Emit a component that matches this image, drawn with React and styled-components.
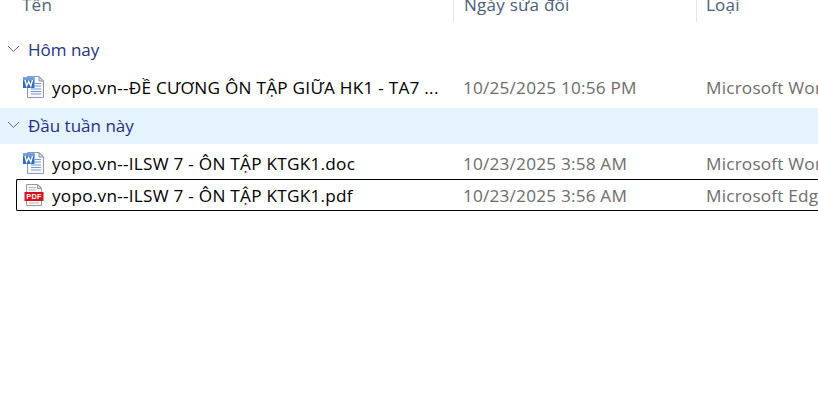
import React from "react";
import styled, { createGlobalStyle } from "styled-components";

const Global = createGlobalStyle`
  html, body { margin: 0; padding: 0; background: #fff; }
  body { font-family: "Open Sans", "Noto Sans", "Liberation Sans", sans-serif; }
`;

const Page = styled.div`
  width: 818px;
  height: 402px;
  overflow: hidden;
  background: #fff;
  display: flex;
  flex-direction: column;
`;

const Header = styled.div`
  height: 22px;
  flex: none;
  display: grid;
  grid-template-columns: 453px 243px 1fr;
  overflow: hidden;
  margin-bottom: 10px;
`;

const HeaderCell = styled.div`
  display: flex;
  align-items: flex-end;
  height: 22px;
  padding-left: ${(p) => p.$pad}px;
  padding-bottom: 6px;
  box-sizing: border-box;
  border-left: ${(p) => (p.$sep ? "1px solid #e5e5e5" : "none")};
  font-size: 17px;
  letter-spacing: 0.25px;
  line-height: 22px;
  color: #4c607a;
  white-space: nowrap;
`;

const Group = styled.div`
  height: 36px;
  box-sizing: border-box;
  padding: 0 0 2px 7px;
  display: flex;
  align-items: center;
  gap: 8px;
  background: ${(p) => (p.$hot ? "#e5f3ff" : "transparent")};
  color: #1e3287;
  font-size: 17px;
  flex: none;
`;

const Chevron = styled.svg`
  width: 13px;
  height: 8px;
  flex: none;
`;

const Rows = styled.div`
  display: flex;
  flex-direction: column;
  padding: ${(p) => p.$top}px 0 ${(p) => p.$bottom}px 16px;
`;

const Row = styled.div`
  height: 32px;
  display: grid;
  grid-template-columns: 437px 243px 1fr;
  align-items: center;
  box-sizing: border-box;
  border: 1px solid ${(p) => (p.$selected ? "#000" : "transparent")};
  border-right: none;
  border-radius: 2px 0 0 2px;
  margin-right: -2px;
  white-space: nowrap;
  overflow: hidden;
`;

const NameCell = styled.div`
  display: flex;
  align-items: center;
  gap: 6px;
  padding-left: 6px;
  margin-left: -1px;
  color: #000;
  font-size: 17.2px;
  letter-spacing: 0.25px;
`;

const Cell = styled.div`
  padding-left: 10px;
  margin-left: -1px;
  color: #6d6d6d;
  font-size: 17.2px;
  letter-spacing: 0.2px;
`;

const FileIcon = styled.svg`
  width: 24px;
  height: 24px;
  flex: none;
`;

const Chev = () => (
  <Chevron viewBox="0 0 13 8">
    <path d="M1 1 L6.5 6.5 L12 1" fill="none" stroke="#6f6f6f" strokeWidth="1" />
  </Chevron>
);

const WordIcon = () => (
  <FileIcon viewBox="0 0 24 24">
    <path d="M5.5 1.5H17L21.5 6V22.5H5.5Z" fill="#f7f9fc" stroke="#8b9bb4" />
    <path d="M17 1.5V6H21.5Z" fill="#c9d7ea" stroke="#8b9bb4" />
    <path d="M13 8.5H19M13 11H19M9 14H19M9 16.5H19M9 19H19" stroke="#7c9ccb" strokeWidth="1.2" />
    <rect x="1" y="2.5" width="11.5" height="10.5" fill="#2f68c0" />
    <rect x="1" y="2.5" width="11.5" height="3" fill="#6c9be0" />
    <path d="M3 5 L4.6 11 L6.7 6.5 L8.8 11 L10.5 5" fill="none" stroke="#fff" strokeWidth="1.4" />
  </FileIcon>
);

const PdfIcon = () => (
  <FileIcon viewBox="0 0 24 24">
    <path d="M4.5 1.5H16L19.5 5V22.5H4.5Z" fill="#fafafa" stroke="#9a9a9a" />
    <path d="M15.5 1.5V5.5H19.5Z" fill="#dedede" stroke="#9a9a9a" />
    <path d="M7 4.5H14M7 7H14" stroke="#b5b5b5" />
    <path d="M7 20H17" stroke="#b5b5b5" />
    <rect x="2.5" y="9" width="19" height="9" fill="#d8101c" />
    <text x="12" y="16.2" textAnchor="middle" fontSize="7.4" fontWeight="700" fill="#fff" fontFamily="Liberation Sans, sans-serif">PDF</text>
  </FileIcon>
);

export default function App() {
  return (
    <Page>
      <Global />
      <Header>
        <HeaderCell $pad={22}>Tên</HeaderCell>
        <HeaderCell $sep $pad={10}>Ngày sửa đổi</HeaderCell>
        <HeaderCell $sep $pad={9}>Loại</HeaderCell>
      </Header>
      <Group>
        <Chev />
        Hôm nay
      </Group>
      <Rows $top={3} $bottom={5}>
        <Row>
          <NameCell><WordIcon />yopo.vn--ĐỀ CƯƠNG ÔN TẬP GIỮA HK1 - TA7 ...</NameCell>
          <Cell>10/25/2025 10:56 PM</Cell>
          <Cell>Microsoft Word Document</Cell>
        </Row>
      </Rows>
      <Group $hot>
        <Chev />
        Đầu tuần này
      </Group>
      <Rows $top={3} $bottom={0}>
        <Row>
          <NameCell><WordIcon />yopo.vn--ILSW 7 - ÔN TẬP KTGK1.doc</NameCell>
          <Cell>10/23/2025 3:58 AM</Cell>
          <Cell>Microsoft Word 97</Cell>
        </Row>
        <Row $selected>
          <NameCell><PdfIcon />yopo.vn--ILSW 7 - ÔN TẬP KTGK1.pdf</NameCell>
          <Cell>10/23/2025 3:56 AM</Cell>
          <Cell>Microsoft Edge PDF</Cell>
        </Row>
      </Rows>
    </Page>
  );
}
